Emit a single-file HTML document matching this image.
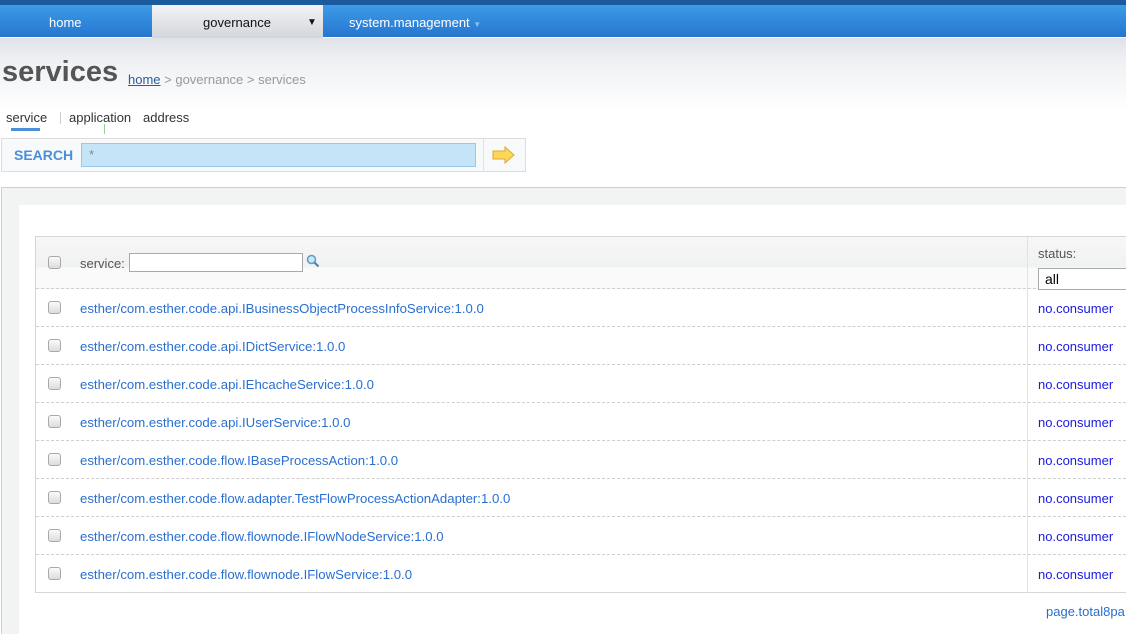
<!DOCTYPE html>
<html><head><style>
*{margin:0;padding:0;box-sizing:border-box}
html{overflow:hidden;width:1126px;height:634px}
body{width:1126px;height:634px;overflow:hidden;font-family:"Liberation Sans",Arial,sans-serif;font-size:13px;background:linear-gradient(#dfe3e8 38px,#eef0f3 60px,#fff 110px);position:relative}
.top{position:absolute;left:0;top:0;width:1126px;height:5px;background:#1b5a9c}
.nav{position:absolute;left:0;top:5px;width:1126px;height:33px;background:linear-gradient(#3d9be8,#2676cf);border-bottom:1px solid #fff}
.nav div{position:absolute;top:0;height:33px;line-height:35px;color:#fff;font-size:13px}
.gov{left:152px;width:171px;background:linear-gradient(#f2f3f5,#d3d6dc);color:#111!important}
.ab{position:absolute}
.panel{position:absolute;left:1px;top:187px;width:1130px;height:460px;border:1px solid #d0d0d0;background:#f2f3f3}
.inner{position:absolute;left:19px;top:205px;width:1110px;height:440px;background:#fff}
.tbl{position:absolute;left:35px;top:236px;width:1100px;height:357px;border:1px solid #d6d6d6;background:#fff}
.row{position:absolute;left:0;width:1100px;height:38px;border-bottom:1px dashed #cfcfcf}
.cb{position:absolute;left:12px;width:13px;height:13px;border:1px solid #a9a9a9;border-radius:3px;background:linear-gradient(#fafafa,#dcdcdc)}
.lk{position:absolute;left:44px;color:#2a6fd0;font-size:13.2px}
.nc{position:absolute;left:1002px;color:#1a1ae0}
</style></head><body>
<div class="top"></div>
<div class="nav">
<div style="left:49px">home</div>
<div class="gov"><span style="position:absolute;left:51px">governance</span><span style="position:absolute;left:155px;font-size:10px">▼</span></div>
<div style="left:349px">system.management <span style="font-size:8px;color:#8cc0f0">▼</span></div>
</div>
<div class="ab" style="left:2px;top:56px;font-size:29px;font-weight:bold;color:#555">services</div>
<div class="ab" style="left:128px;top:72px;color:#999"><u style="color:#2a5c9c">home</u> &gt; governance &gt; services</div>
<div class="ab" style="left:6px;top:110px;color:#333">service</div>
<div class="ab" style="left:11px;top:128px;width:29px;height:3px;background:#4d8fd6"></div>
<div class="ab" style="left:60px;top:112px;width:1px;height:12px;background:#ccc"></div>
<div class="ab" style="left:69px;top:110px;color:#333">application</div>
<div class="ab" style="left:104px;top:124px;width:1px;height:10px;background:#9c9"></div>
<div class="ab" style="left:143px;top:110px;color:#333">address</div>
<div class="ab" style="left:1px;top:138px;width:525px;height:34px;border:1px solid #ddd;background:#f8f9fa"></div>
<div class="ab" style="left:14px;top:147px;color:#4a90d9;font-weight:bold;font-size:14px">SEARCH</div>
<div class="ab" style="left:81px;top:143px;width:395px;height:24px;border:1px solid #9cc8e8;background:#c6e4f7;color:#888;padding:3px 7px">*</div>
<div class="ab" style="left:483px;top:139px;width:1px;height:32px;background:#e3e3e3"></div>
<svg class="ab" style="left:492px;top:146px" width="24" height="18"><path d="M1 5h12V1l9 8-9 8v-4H1z" fill="#fcd75a" stroke="#e0a830"/></svg>
<div class="panel"></div><div class="inner"></div>
<div class="tbl">
<div style="position:absolute;left:0;top:0;width:1100px;height:52px;background:linear-gradient(#f7f7f8,#f0f1f2 30px,#fafafa 31px);border-bottom:1px dashed #cfcfcf"></div>
<div class="cb" style="top:19px"></div>
<div class="ab" style="left:44px;top:19px;color:#555">service:</div>
<div class="ab" style="left:93px;top:16px;width:174px;height:19px;border:1px solid #aaa;background:#fff"></div>
<svg class="ab" style="left:270px;top:17px" width="14" height="14"><circle cx="5.5" cy="5.5" r="4" fill="#cfe6f5" stroke="#5a9cc8" stroke-width="1.5"/><path d="M8.5 8.5l4 4" stroke="#3f86bd" stroke-width="2"/></svg>
<div class="ab" style="left:991px;top:0;width:1px;height:356px;background:#e2e2e2"></div>
<div class="ab" style="left:1002px;top:9px;color:#555">status:</div>
<div class="ab" style="left:1002px;top:31px;width:100px;height:22px;border:1px solid #aaa;background:#fff;font-size:14px;padding:2px 6px;color:#000">all</div>
</div>
<div style="position:absolute;left:36px;top:289px">
<div class="row" style="top:0"><div class="cb" style="top:12px"></div><div class="lk" style="top:12px">esther/com.esther.code.api.IBusinessObjectProcessInfoService:1.0.0</div><div class="nc" style="top:12px">no.consumer</div></div>
<div class="row" style="top:38px"><div class="cb" style="top:12px"></div><div class="lk" style="top:12px">esther/com.esther.code.api.IDictService:1.0.0</div><div class="nc" style="top:12px">no.consumer</div></div>
<div class="row" style="top:76px"><div class="cb" style="top:12px"></div><div class="lk" style="top:12px">esther/com.esther.code.api.IEhcacheService:1.0.0</div><div class="nc" style="top:12px">no.consumer</div></div>
<div class="row" style="top:114px"><div class="cb" style="top:12px"></div><div class="lk" style="top:12px">esther/com.esther.code.api.IUserService:1.0.0</div><div class="nc" style="top:12px">no.consumer</div></div>
<div class="row" style="top:152px"><div class="cb" style="top:12px"></div><div class="lk" style="top:12px">esther/com.esther.code.flow.IBaseProcessAction:1.0.0</div><div class="nc" style="top:12px">no.consumer</div></div>
<div class="row" style="top:190px"><div class="cb" style="top:12px"></div><div class="lk" style="top:12px">esther/com.esther.code.flow.adapter.TestFlowProcessActionAdapter:1.0.0</div><div class="nc" style="top:12px">no.consumer</div></div>
<div class="row" style="top:228px"><div class="cb" style="top:12px"></div><div class="lk" style="top:12px">esther/com.esther.code.flow.flownode.IFlowNodeService:1.0.0</div><div class="nc" style="top:12px">no.consumer</div></div>
<div class="row" style="top:266px;border-bottom:none"><div class="cb" style="top:12px"></div><div class="lk" style="top:12px">esther/com.esther.code.flow.flownode.IFlowService:1.0.0</div><div class="nc" style="top:12px">no.consumer</div></div>
</div>
<div class="ab" style="left:1046px;top:604px;color:#2a6fd0">page.total8pa</div>
</body></html>
